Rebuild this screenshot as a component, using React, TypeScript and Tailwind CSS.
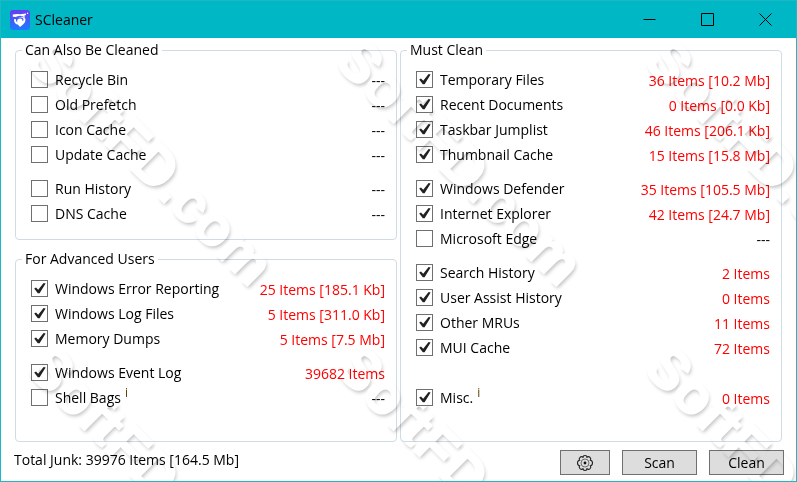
import React from 'react';

type JunkItem = {
  id: string;
  label: string;
  value: string;
  checked?: boolean;
  info?: boolean;
};

type JunkGroup = {
  items: JunkItem[];
  spaced?: boolean;
};

const cleanable: JunkGroup[] = [
  {
    items: [
      { id: 'recycle-bin', label: 'Recycle Bin', value: '---' },
      { id: 'old-prefetch', label: 'Old Prefetch', value: '---' },
      { id: 'icon-cache', label: 'Icon Cache', value: '---' },
      { id: 'update-cache', label: 'Update Cache', value: '---' },
    ],
  },
  {
    items: [
      { id: 'run-history', label: 'Run History', value: '---' },
      { id: 'dns-cache', label: 'DNS Cache', value: '---' },
    ],
  },
];

const advanced: JunkGroup[] = [
  {
    items: [
      { id: 'error-reporting', label: 'Windows Error Reporting', value: '25 Items [185.1 Kb]', checked: true },
      { id: 'log-files', label: 'Windows Log Files', value: '5 Items [311.0 Kb]', checked: true },
      { id: 'memory-dumps', label: 'Memory Dumps', value: '5 Items [7.5 Mb]', checked: true },
    ],
  },
  {
    items: [
      { id: 'event-log', label: 'Windows Event Log', value: '39682 Items', checked: true },
      { id: 'shell-bags', label: 'Shell Bags', value: '---', info: true },
    ],
  },
];

const mustClean: JunkGroup[] = [
  {
    items: [
      { id: 'temp-files', label: 'Temporary Files', value: '36 Items [10.2 Mb]', checked: true },
      { id: 'recent-docs', label: 'Recent Documents', value: '0 Items [0.0 Kb]', checked: true },
      { id: 'jumplist', label: 'Taskbar Jumplist', value: '46 Items [206.1 Kb]', checked: true },
      { id: 'thumbnails', label: 'Thumbnail Cache', value: '15 Items [15.8 Mb]', checked: true },
    ],
  },
  {
    items: [
      { id: 'defender', label: 'Windows Defender', value: '35 Items [105.5 Mb]', checked: true },
      { id: 'ie', label: 'Internet Explorer', value: '42 Items [24.7 Mb]', checked: true },
      { id: 'edge', label: 'Microsoft Edge', value: '---' },
    ],
  },
  {
    items: [
      { id: 'search-history', label: 'Search History', value: '2 Items', checked: true },
      { id: 'user-assist', label: 'User Assist History', value: '0 Items', checked: true },
      { id: 'other-mrus', label: 'Other MRUs', value: '11 Items', checked: true },
      { id: 'mui-cache', label: 'MUI Cache', value: '72 Items', checked: true },
    ],
  },
  {
    spaced: true,
    items: [{ id: 'misc', label: 'Misc.', value: '0 Items', checked: true, info: true }],
  },
];

const AppIcon: React.FC = () => (
  <svg viewBox="0 0 20 20" className="h-5 w-5 shrink-0" aria-hidden="true">
    <defs>
      <linearGradient id="app-icon" x1="0" y1="0" x2="0" y2="1">
        <stop offset="0" stopColor="#6a3df0" />
        <stop offset="1" stopColor="#1a7cff" />
      </linearGradient>
    </defs>
    <rect width="20" height="20" rx="3" fill="url(#app-icon)" />
    <path d="M2.8 4.6 Q6 3.8 10 4.2 L16 3.6 L16 5 L14.2 5.8 L15.4 8 Q11.4 4.8 7.6 6.2 L5.8 7 L2.8 6.8 Z" fill="#fff" />
    <path d="M4.2 9 Q3.6 12.6 6.4 14.2 L7.8 14.4 L10 17 L13 14.4 Q15.8 12.6 15.4 8.8 Q12.6 5.6 9 7.4 Q6.4 9 7.4 12.4 Q5.6 11.4 5.8 9 Z" fill="#fff" />
    <path d="M7 9.4 Q10 6.400 12.800 9 V10.800" fill="none" stroke="#4160f6" strokeWidth="1.2" />
    <circle cx="17.6" cy="3.2" r="0.7" fill="#fff" />
  </svg>
);

const GearIcon: React.FC = () => (
  <svg viewBox="0 0 18 18" className="h-[18px] w-[18px]" fill="none" stroke="#222" aria-hidden="true">
    <path
      d="M7 3.2 Q7 1.5 9 1.5 Q11 1.5 11 3.2 Q12.6 1.9 14 3.3 Q15.4 4.8 14.4 6.3 Q16.5 6.6 16.5 9 Q16.5 11.4 14.4 11.7 Q15.4 13.2 14 14.7 Q12.6 16.1 11 14.8 Q11 16.5 9 16.5 Q7 16.5 7 14.8 Q5.4 16.1 4 14.7 Q2.6 13.2 3.6 11.7 Q1.5 11.4 1.5 9 Q1.5 6.6 3.6 6.3 Q2.6 4.8 4 3.3 Q5.4 1.9 7 3.2 Z"
      strokeWidth="1.1"
    />
    <circle cx="9" cy="9" r="4" strokeWidth="0.6" />
    <circle cx="9" cy="9" r="1.4" fill="#111" stroke="none" />
  </svg>
);

const JunkRow: React.FC<{ item: JunkItem }> = ({ item }) => (
  <div className="flex h-[25px] items-center justify-between">
    <label htmlFor={item.id} className="flex items-center gap-[7px]">
      <span className="relative flex">
        <input
          id={item.id}
          type="checkbox"
          defaultChecked={item.checked}
          className="peer h-[17px] w-[17px] appearance-none border border-[#707070] bg-white"
        />
        <svg
          viewBox="0 0 17 17"
          className="pointer-events-none absolute inset-0 hidden h-[17px] w-[17px] peer-checked:block"
          aria-hidden="true"
        >
          <path d="M3.2 8.6 L5 7.4 L7.2 9.8 L12.6 3 L14.6 3.4 L8.6 13.2 L6.8 13.2 Z" fill="#212121" />
        </svg>
      </span>
      <span>
        {item.label}
        {item.info && <span className="ml-1 align-super text-[12px] leading-none text-[#5a3c00]">i</span>}
      </span>
    </label>
    <output htmlFor={item.id} className={item.value === '---' ? 'pt-0.5' : 'pt-0.5 text-[#f00]'}>
      {item.value}
    </output>
  </div>
);

const JunkPanel: React.FC<{ title: string; groups: JunkGroup[]; className?: string }> = ({
  title,
  groups,
  className = '',
}) => (
  <fieldset className={`min-w-0 rounded-[4px] border border-[#cfdce3] pr-[11px] pb-[13px] pl-[15px] ${className}`}>
    <legend className="-ml-[9px] px-[3px] leading-5">{title}</legend>
    <div className="flex flex-col gap-[9px] pt-[7px]">
      {groups.map((group) => (
        <div key={group.items[0].id} className={group.spaced ? 'pt-4' : ''}>
          {group.items.map((item) => (
            <JunkRow key={item.id} item={item} />
          ))}
        </div>
      ))}
    </div>
  </fieldset>
);

const TitleButton: React.FC<{ label: string; path: string }> = ({ label, path }) => (
  <button type="button" aria-label={label} className="flex h-full w-[58px] items-center justify-center">
    <svg viewBox="0 0 13 13" className="h-[13px] w-[13px]" fill="none" stroke="#000" aria-hidden="true">
      <path d={path} />
    </svg>
  </button>
);

// Stamps tile the window on a 309 x 307 grid
const stamps = [
  '-left-5 top-[131px]',
  'left-[289px] top-[131px]',
  'left-[598px] top-[131px]',
  '-left-5 top-[438px]',
  'left-[289px] top-[438px]',
  'left-[598px] top-[438px]',
];

const Watermark: React.FC = () => (
  <div className="pointer-events-none absolute inset-0 overflow-hidden mix-blend-multiply" aria-hidden="true">
    {stamps.map((place) => (
      <div
        key={place}
        className={`absolute flex h-[58px] w-[340px] rotate-45 items-center justify-center font-['Liberation_Sans'] text-[57px] leading-none font-bold text-white [-webkit-text-stroke:2px_white] [text-shadow:3px_1px_4px_rgba(0,0,0,0.24)] ${place}`}
      >
        SoftFD.com
      </div>
    ))}
  </div>
);

const App: React.FC = () => {
  return (
    <div className="relative flex min-h-screen flex-col border border-[#1cb9c5] bg-white font-['Open_Sans','Noto_Sans',sans-serif] text-[14px] leading-5 text-black">
      <header className="flex h-[37px] items-center bg-[#00b7c5] pr-0.5 pl-[9px]">
        <AppIcon />
        <h1 className="flex-1 pl-[5px]">SCleaner</h1>
        <div className="flex h-full">
          <TitleButton label="Minimize" path="M.5 6.5h12" />
          <TitleButton label="Maximize" path="M.5 .5h12v12H.5z" />
          <TitleButton label="Close" path="M.5 .5l12 12M12.5 .5l-12 12" />
        </div>
      </header>

      <main className="grid flex-1 grid-cols-2 gap-[3px] px-[14px] pt-0.5">
        <div className="flex flex-col gap-[9px]">
          <JunkPanel title="Can Also Be Cleaned" groups={cleanable} />
          <JunkPanel title="For Advanced Users" groups={advanced} className="flex-1" />
        </div>
        <JunkPanel title="Must Clean" groups={mustClean} />
      </main>

      <footer className="flex items-start gap-3 pt-2 pr-3 pb-[6px] pl-[13px]">
        <p className="flex-1">Total Junk: 39976 Items [164.5 Mb]</p>
        <button
          type="button"
          aria-label="Settings"
          className="flex h-[25px] w-[50px] items-center justify-center border border-[#707070] bg-[#ddd]"
        >
          <GearIcon />
        </button>
        <button type="button" className="h-[25px] w-[75px] border border-[#707070] bg-[#ddd]">
          Scan
        </button>
        <button type="button" className="h-[25px] w-[75px] border border-[#707070] bg-[#ddd]">
          Clean
        </button>
      </footer>

      <Watermark />
    </div>
  );
};

export default App;
